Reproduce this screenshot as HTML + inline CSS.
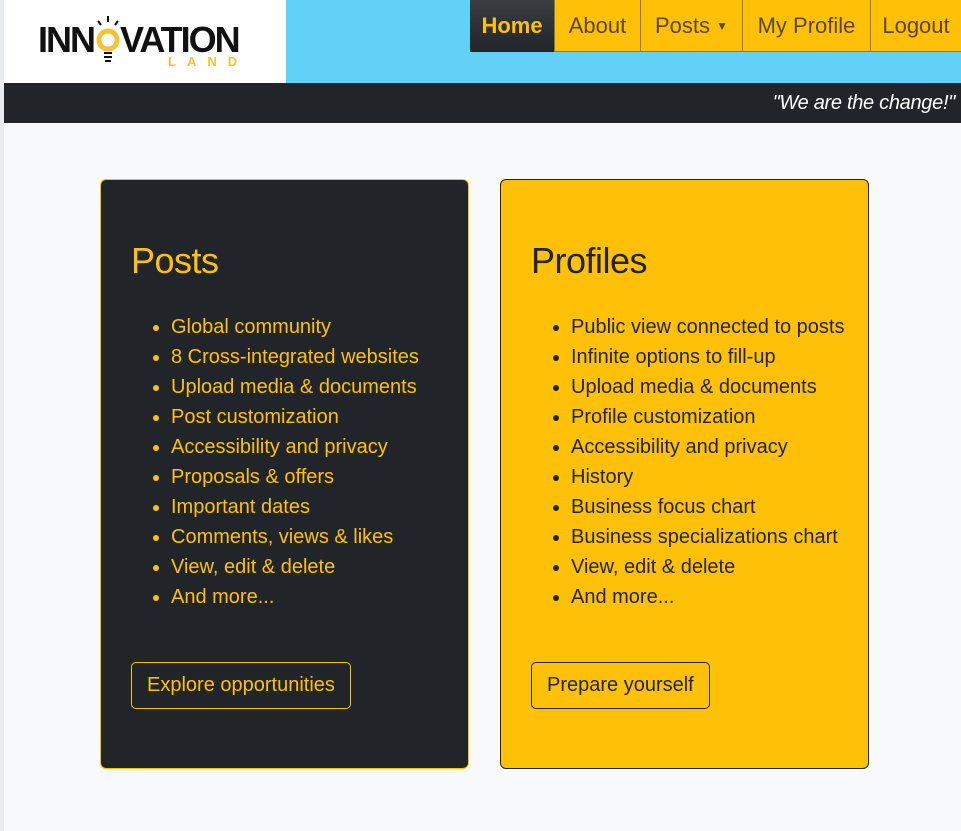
<!DOCTYPE html>
<html><head><meta charset="utf-8"><style>
*{box-sizing:border-box;margin:0;padding:0}
body{width:961px;height:831px;overflow:hidden;background:#f8f9fa;font-family:"Liberation Sans","DejaVu Sans",sans-serif;position:relative}
.strip{position:absolute;left:0;top:0;width:4px;height:831px;background:#e9ecef}
.hdr{position:absolute;left:4px;top:0;width:957px;height:83px;background:#61d1f8}
.logo{position:absolute;left:0;top:0;width:282px;height:83px;background:#fff}
.bar{position:absolute;left:4px;top:83px;width:957px;height:40px;background:#212529;color:#fff;font-style:italic;font-size:20px;text-align:right;padding:9px 6px 0 0;letter-spacing:-0.3px}
.nav{position:absolute;top:0;height:52px;background:#ffc107;color:#5a4608;font-size:22px;line-height:52px;text-align:center;border-left:1px solid #8a7a3a;border-bottom:1px solid #8a7a3a}
.card{position:absolute;top:179px;width:369px;height:590px;border-radius:6px;padding:60px 0 0 30px}
.card h2{font-size:36px;font-weight:normal;margin-bottom:30px;letter-spacing:-0.5px}
.card ul{padding-left:40px;font-size:20px;line-height:30px;list-style:disc}
.btn{position:absolute;left:30px;top:482px;height:47px;border-radius:5px;font-size:20px;line-height:45px;padding:0 15px}
</style></head><body>
<div class="strip"></div>
<div class="hdr">
 <div class="logo">
  <svg width="282" height="83" viewBox="0 0 282 83">
   <circle cx="104" cy="40" r="9" fill="none" stroke="#f6c232" stroke-width="5"/>
   <rect x="100" y="52" width="8" height="2" fill="#111"/><rect x="100" y="56" width="8" height="2" fill="#111"/><rect x="101" y="60" width="6" height="2" fill="#111"/>
   <line x1="104" y1="16" x2="104" y2="22" stroke="#111" stroke-width="2"/><line x1="94" y1="21" x2="97" y2="25" stroke="#111" stroke-width="2"/><line x1="114" y1="21" x2="111" y2="25" stroke="#111" stroke-width="2"/>
   <text x="34" y="52" font-family="Liberation Sans" font-weight="bold" font-size="36" fill="#111" letter-spacing="-2">INN</text>
   <text x="116" y="52" font-family="Liberation Sans" font-weight="bold" font-size="36" fill="#111" letter-spacing="-2">VATION</text>
   <text x="164" y="66" font-family="Liberation Sans" font-weight="bold" font-size="13" fill="#f6c232" letter-spacing="11">LAND</text>
  </svg>
 </div>
</div>
<div class="nav" style="left:470px;width:84px;background:linear-gradient(#3a3d42,#212529);color:#ffc107;font-weight:bold;border:none">Home</div>
<div class="nav" style="left:554px;width:86px">About</div>
<div class="nav" style="left:640px;width:102px">Posts <span style="font-size:12px;vertical-align:3px">&#9660;</span></div>
<div class="nav" style="left:742px;width:128px">My Profile</div>
<div class="nav" style="left:870px;width:91px">Logout</div>
<div class="bar">"We are the change!"</div>
<div class="card" style="left:100px;background:#212529;color:#ffc107;border:1px solid #ffc107">
 <h2>Posts</h2>
 <ul><li>Global community</li><li>8 Cross-integrated websites</li><li>Upload media &amp; documents</li><li>Post customization</li><li>Accessibility and privacy</li><li>Proposals &amp; offers</li><li>Important dates</li><li>Comments, views &amp; likes</li><li>View, edit &amp; delete</li><li>And more...</li></ul>
 <div class="btn" style="border:1px solid #ffc107">Explore opportunities</div>
</div>
<div class="card" style="left:500px;background:#ffc107;color:#212529;border:1px solid #212529">
 <h2>Profiles</h2>
 <ul><li>Public view connected to posts</li><li>Infinite options to fill-up</li><li>Upload media &amp; documents</li><li>Profile customization</li><li>Accessibility and privacy</li><li>History</li><li>Business focus chart</li><li>Business specializations chart</li><li>View, edit &amp; delete</li><li>And more...</li></ul>
 <div class="btn" style="border:1px solid #212529">Prepare yourself</div>
</div>
</body></html>
